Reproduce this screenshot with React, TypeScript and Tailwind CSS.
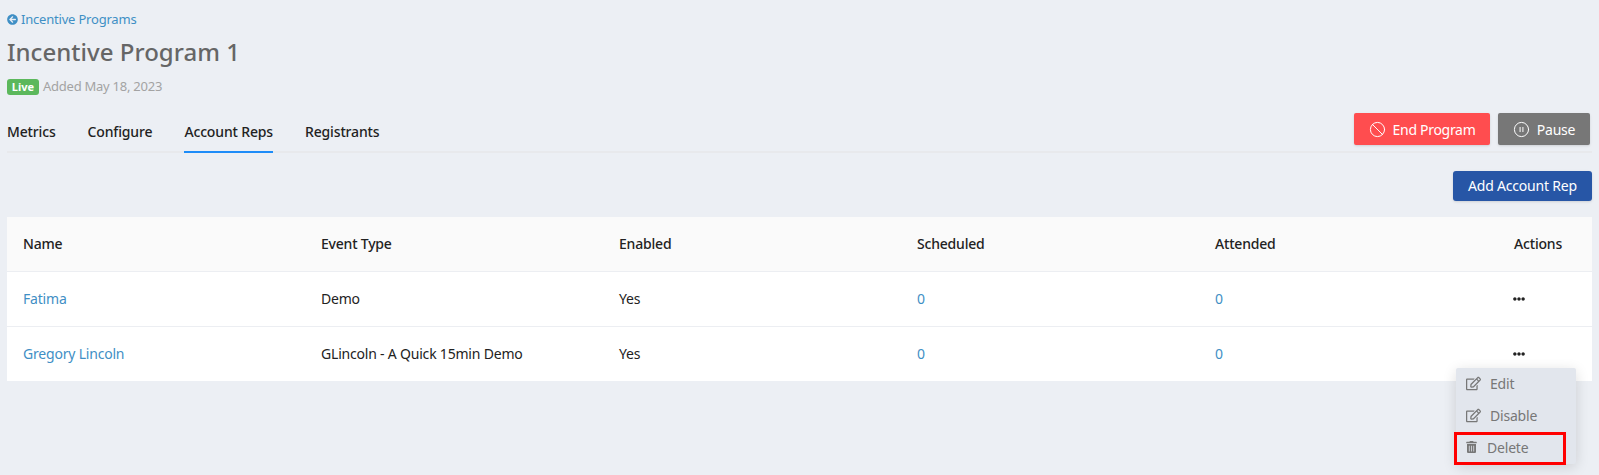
import { Ban, CirclePause } from "lucide-react";
import { FaArrowCircleLeft, FaEllipsisH, FaRegEdit, FaTrashAlt } from "react-icons/fa";

const font = { fontFamily: '"Noto Sans", "Open Sans", sans-serif' };

const tabs = ["Metrics", "Configure", "Account Reps", "Registrants"];
const rows = [
  ["Fatima", "Demo"],
  ["Gregory Lincoln", "GLincoln - A Quick 15min Demo"],
];

export default function App() {
  return (
    <div style={font} className="relative h-[475px] w-[1599px] overflow-hidden bg-[#eceff4] px-[7px] pt-[9px] text-[14px] tracking-[-0.2px]">
      <a className="flex items-center gap-[3px] text-[13px] leading-[20px] text-[#3f8fc5]">
        <FaArrowCircleLeft className="h-[11px] w-[11px]" />
        Incentive Programs
      </a>
      <h1 className="mt-[7px] text-[24px] font-medium leading-[32px] tracking-[0.03px] text-[#666666]">Incentive Program 1</h1>
      <div className="mt-[10px] flex h-[18px] items-center gap-[4px]">
        <span className="w-[32px] rounded-[3px] bg-[#5cb85c] text-center text-[11px] font-bold leading-[16px] tracking-normal text-white">Live</span>
        <span className="text-[13px] tracking-[-0.25px] text-[#a3a3a3]">Added May 18, 2023</span>
      </div>
      <div className="mt-[13px] flex h-[44px] items-end justify-between border-b-2 border-[#e8e9ec]">
        <div className="flex gap-[32px]">
          {tabs.map((t) => (
            <div
              key={t}
              className={
                "mb-[-2px] h-[37px] pt-[5px] text-[14px] font-medium tracking-[-0.15px] text-[#222222] " +
                (t === "Account Reps" ? "border-b-2 border-[#1d8cf8]" : "")
              }
            >
              {t}
            </div>
          ))}
        </div>
        <div className="mb-[6px] mr-[2px] flex gap-[8px]">
          <button className="flex h-[32px] w-[136px] items-center justify-center gap-[7px] rounded-[2px] bg-[#ff4d4f] text-[14px] tracking-[-0.3px] text-white shadow-sm">
            <Ban className="h-[17px] w-[17px]" strokeWidth={1.4} />
            End Program
          </button>
          <button className="flex h-[32px] w-[92px] items-center justify-center gap-[7px] rounded-[2px] bg-[#777777] text-[14px] text-white shadow-sm">
            <CirclePause className="h-[17px] w-[17px]" strokeWidth={1.4} />
            Pause
          </button>
        </div>
      </div>
      <div className="mt-[18px] flex justify-end">
        <button className="h-[30px] w-[139px] rounded-[3px] bg-[#2756a6] pb-[2px] text-[14px] text-white shadow-sm">Add Account Rep</button>
      </div>
      <table className="mt-[16px] w-full table-fixed border-collapse bg-white text-[14px] text-[#222222]">
        <colgroup>
          <col className="w-[298px]" />
          <col className="w-[298px]" />
          <col className="w-[298px]" />
          <col className="w-[298px]" />
          <col className="w-[298px]" />
          <col />
        </colgroup>
        <thead>
          <tr className="h-[54px] border-b border-[#eceef2] bg-[#fafafa] text-left">
            {["Name", "Event Type", "Enabled", "Scheduled", "Attended"].map((h) => (
              <th key={h} className="pb-[1px] pl-[16px] font-medium">{h}</th>
            ))}
            <th className="pb-[1px] pr-[30px] text-right font-medium">Actions</th>
          </tr>
        </thead>
        <tbody>
          {rows.map(([name, type], i) => (
            <tr key={name} className={"h-[55px] " + (i === 0 ? "border-b border-[#eceef2]" : "")}>
              <td className="pl-[16px] text-[#3f8fc5]">{name}</td>
              <td className="pl-[16px]">{type}</td>
              <td className="pl-[16px]">Yes</td>
              <td className="pl-[16px] text-[#3f8fc5]">0</td>
              <td className="pl-[16px] text-[#3f8fc5]">0</td>
              <td className="pr-[67px]">
                <FaEllipsisH className="ml-auto h-[12px] w-[12px] text-[#222222]" />
              </td>
            </tr>
          ))}
        </tbody>
      </table>
      <div className="absolute left-[1456px] top-[368px] w-[120px] rounded-[2px] bg-[#e2e6ed] text-[14px] text-[#777777] shadow-[0_3px_14px_rgba(0,0,0,0.14)]">
        <div className="flex h-[32px] items-center gap-[9px] pb-[2px] pl-[10px]">
          <FaRegEdit className="h-[15px] w-[15px]" />
          Edit
        </div>
        <div className="flex h-[32px] items-center gap-[9px] pb-[2px] pl-[10px]">
          <FaRegEdit className="h-[15px] w-[15px]" />
          Disable
        </div>
        <div className="flex h-[32px] items-center gap-[10px] pb-[2px] pl-[10px]">
          <FaTrashAlt className="h-[12px] w-[11px]" />
          Delete
        </div>
      </div>
      <div className="absolute left-[1454px] top-[432px] h-[33px] w-[112px] border-[3px] border-[#ff0000]" />
    </div>
  );
}
